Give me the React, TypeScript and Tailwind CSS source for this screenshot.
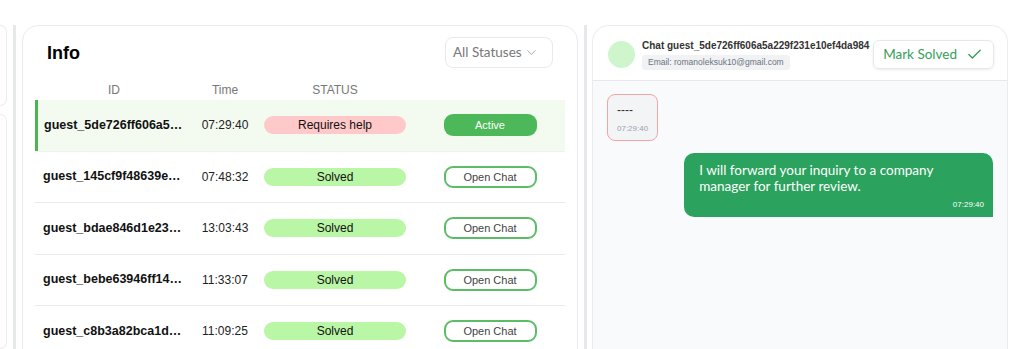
import React from 'react';
import { Check, ChevronDown } from 'lucide-react';

type Row = { id: string; time: string; status: 'help' | 'solved'; active?: boolean };

const rows: Row[] = [
  { id: 'guest_5de726ff606a5a229f231e10ef4da984', time: '07:29:40', status: 'help', active: true },
  { id: 'guest_145cf9f48639e0c1b2a7d5e3f4a1b2c3', time: '07:48:32', status: 'solved' },
  { id: 'guest_bdae846d1e23a9f0c3b5e7d1a2f4c6b8', time: '13:03:43', status: 'solved' },
  { id: 'guest_bebe63946ff14c2a8d0e5b7f9a1c3e5d', time: '11:33:07', status: 'solved' },
  { id: 'guest_c8b3a82bca1d4e6f8a0b2c4d6e8f0a1b', time: '11:09:25', status: 'solved' },
];

function Divider({ w }: { w: string }) {
  return (
    <div className={`${w} flex justify-center shrink-0`}>
      <div className="w-[3px] bg-[#e6e8eb]" />
    </div>
  );
}

export default function App() {
  return (
    <div className="h-[349px] overflow-hidden bg-white flex pt-[25px] pr-4 font-['Liberation_Sans',Arial,sans-serif] text-[#111]">
      {/* left column, mostly off screen */}
      <div className="w-[7px] shrink-0 flex flex-col gap-2">
        <div className="h-[103px] rounded-r-2xl border border-l-0 border-[#ececec]" />
        <div className="h-[300px] rounded-r-2xl border border-l-0 border-[#ececec]" />
      </div>
      <Divider w="w-[15px]" />

      {/* list */}
      <div className="w-[556px] shrink-0 h-[400px] rounded-2xl border border-[#ececec] bg-white">
        <div className="flex items-center justify-between px-6 pt-[11px]">
          <h2 className="text-lg font-bold text-black">Info</h2>
          <div className="h-[31px] w-[108px] rounded-lg border border-[#e8e9ec] flex items-center pl-[7px] pr-[13px] justify-between font-['Lato',sans-serif] text-[13.5px] text-[#777]">
            <span>All Statuses</span>
            <ChevronDown className="w-[15px] h-[15px] text-[#a0a4ab]" strokeWidth={1.5} />
          </div>
        </div>
        <div className="px-3 mt-3">
          <div className="grid grid-cols-[158px_64px_156px_154px] h-5 items-center text-[12px] text-[#777] text-center">
            <span>ID</span>
            <span>Time</span>
            <span>STATUS</span>
            <span />
          </div>
          {rows.map(r => (
            <div key={r.id}
              className={`grid grid-cols-[158px_64px_156px_154px] h-[51.5px] items-center border-b ${r.active ? 'bg-[#f3fbf1] border-[#eef1ee] shadow-[inset_3px_0_0_#4cb551]' : 'border-[#e8eaed]'}`}>
              <span className={`truncate text-[12.5px] font-bold ${r.active ? 'pl-[9px]' : 'pl-2'} pr-[8px]`}>{r.id}</span>
              <span className="text-center text-[12px] text-[#222]">{r.time}</span>
              <div className={`mx-[7px] h-[18px] rounded-full text-center text-[12px] leading-[18px] text-[#111] ${r.status === 'help' ? 'bg-[#ffc9c9]' : 'bg-[#b9f6a5]'}`}>
                {r.status === 'help' ? 'Requires help' : 'Solved'}
              </div>
              <div className="flex justify-center">
                {r.active ? (
                  <button className="w-[93px] h-[22px] rounded-[9px] bg-[#4db85a] text-white text-[11px]">Active</button>
                ) : (
                  <button className="w-[93px] h-[22px] rounded-[9px] border-2 border-[#5cbd66] bg-white text-[#444] text-[11px]">Open Chat</button>
                )}
              </div>
            </div>
          ))}
        </div>
      </div>

      <Divider w="w-[14px]" />

      {/* chat */}
      <div className="flex-1 min-w-0 h-[400px] rounded-2xl border border-[#ececec] overflow-hidden flex flex-col bg-white">
        <div className="h-[55px] shrink-0 border-b border-[#e6e8eb] flex items-center justify-between pl-[15px] pr-[13px] pt-[3px]">
          <div className="flex items-center gap-[7px] min-w-0">
            <div className="w-[27px] h-[27px] shrink-0 rounded-full bg-[#cff5cc]" />
            <div className="flex flex-col gap-[2px] min-w-0">
              <span className="whitespace-nowrap text-[10px] font-bold text-[#333] leading-[14px]">Chat guest_5de726ff606a5a229f231e10ef4da984</span>
              <span className="self-start whitespace-nowrap rounded bg-[#f1f2f4] px-[6px] h-[15px] leading-[15px] text-[8.5px] text-[#6b7280]">Email: romanoleksuk10@gmail.com</span>
            </div>
          </div>
          <button className="shrink-0 whitespace-nowrap h-[29px] pl-[9px] pr-[10px] rounded-md border border-[#e6e8eb] shadow-[0_1px_3px_rgba(0,0,0,0.08)] flex items-center gap-[9px] font-['Lato',sans-serif] text-[13.5px] text-[#36a05a]">
            Mark Solved
            <Check className="w-[17px] h-[17px]" strokeWidth={2} />
          </button>
        </div>
        <div className="flex-1 bg-[#f9fafb] px-[14px] pt-[13px]">
          <div className="inline-block rounded-lg border border-[#f5a3a3] bg-[#f3f4f6] px-[9px] pt-[6px] pb-[5px]">
            <div className="text-[12px] leading-[18px] text-[#333]">----</div>
            <div className="mt-1 text-[8px] leading-[12px] text-[#9ca3af]">07:29:40</div>
          </div>
          <div className="mt-3 ml-auto max-w-[80%] rounded-[10px] rounded-br-none bg-[#2ba25d] px-[15px] pt-[9px] pb-[7px] text-white">
            <p className="font-['Lato',sans-serif] text-[13.5px] leading-4">I will forward your inquiry to a company manager for further review.</p>
            <div className="mt-[6px] -mr-[6px] text-right text-[8px] leading-[10px]">07:29:40</div>
          </div>
        </div>
      </div>
    </div>
  );
}
